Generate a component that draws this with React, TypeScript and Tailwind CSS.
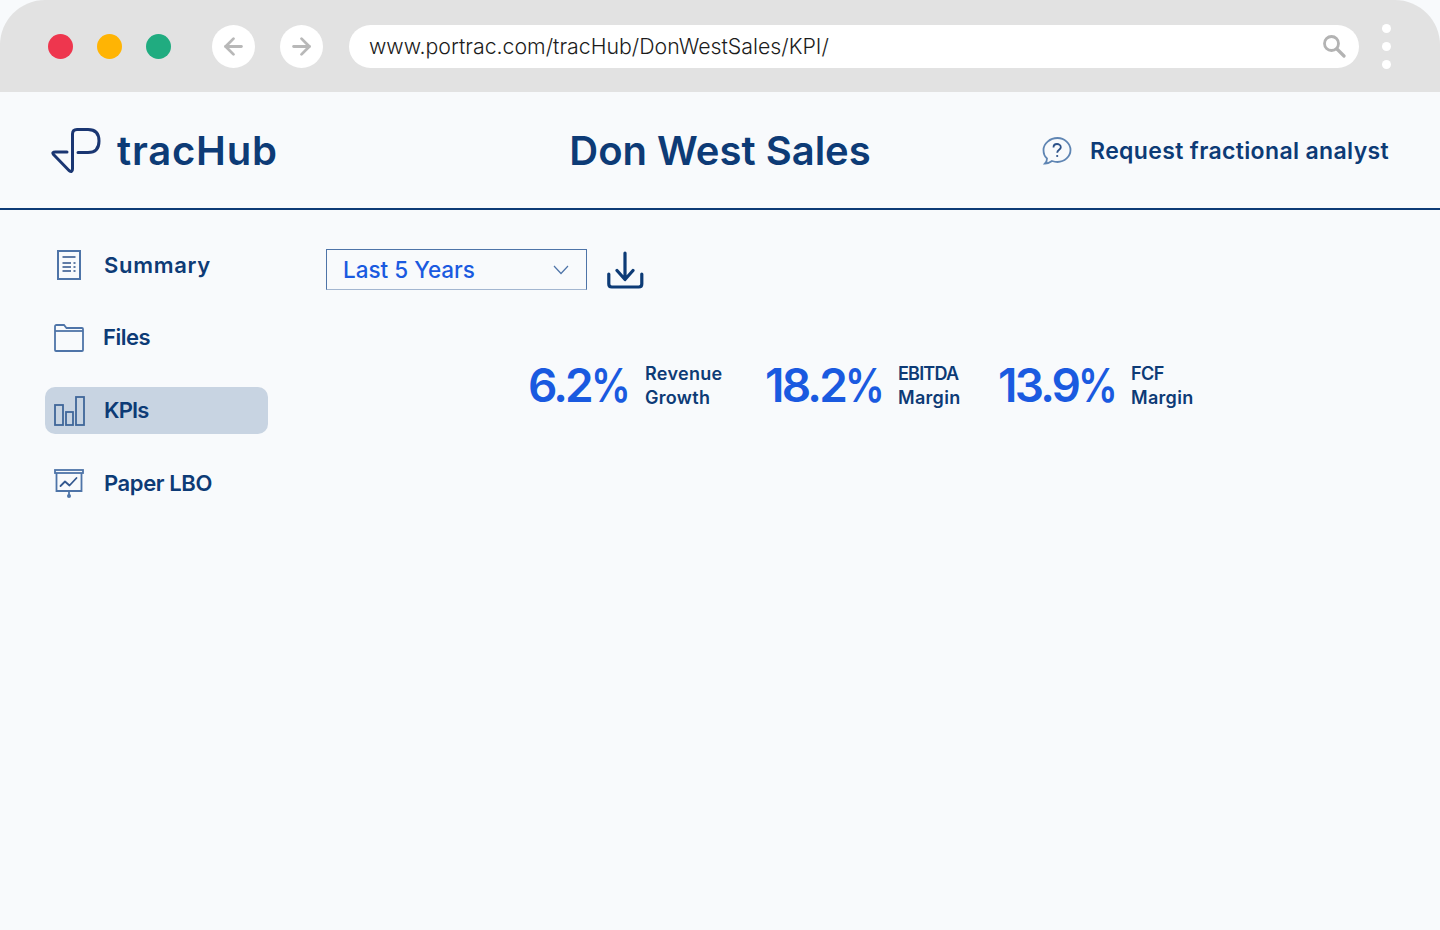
import { ArrowLeft, ArrowRight } from "lucide-react";
import type { ReactNode } from "react";

const LogoMark = () => (
  <svg width="50" height="46" viewBox="0 0 50 46" fill="none" stroke="#1a3672" strokeWidth="3" strokeLinejoin="round" strokeLinecap="round">
    <path d="M16 24H4.500Q0.500 24 2.500 26.500L18 42.500Q21.500 45 21.500 41V6Q21.500 1.500 26 1.500H37Q48 1.500 48 13Q48 24.500 37 24.500H27" />
  </svg>
);

const SearchIcon = () => (
  <svg width="24" height="24" viewBox="0 0 24 24" fill="none" stroke="#b3b3b3" strokeWidth="2.800" strokeLinecap="round">
    <circle cx="9.500" cy="9.500" r="7" />
    <path d="M15 15L22 22" strokeWidth="3.200" />
  </svg>
);

const SummaryIcon = () => (
  <svg width="24" height="30" viewBox="0 0 24 30" fill="none" stroke="#4e74a8" strokeWidth="2">
    <rect x="1" y="1" width="22" height="28" />
    <path d="M5.500 7H18.500M5.500 13H14M16.500 13H18.500M5.500 17H14M16.500 17H18.500M5.500 21H14M16.500 21H18.500" strokeWidth="1.300" stroke="#2d5289" />
  </svg>
);

const FilesIcon = () => (
  <svg width="30" height="28" viewBox="0 0 30 28" fill="none" stroke="#4e74a8" strokeWidth="1.800">
    <path d="M1 26V2.500Q1 1 2.500 1H10L12.500 4H28Q29 4 29 5V26Q29 27 28 27H2Q1 27 1 26Z" />
    <path d="M1 7H29" />
  </svg>
);

const KpiIcon = () => (
  <svg width="31" height="30" viewBox="0 0 31 30" fill="none" stroke="#3f6699" strokeWidth="1.800">
    <rect x="1" y="9" width="8" height="20" />
    <rect x="12" y="16" width="7" height="13" />
    <rect x="22" y="1" width="8" height="28" />
  </svg>
);

const LboIcon = () => (
  <svg width="30" height="30" viewBox="0 0 30 30" fill="none" stroke="#4e74a8" strokeWidth="1.800">
    <rect x="1" y="1" width="28" height="3" />
    <path d="M2.500 4V22H27.500V4" />
    <path d="M15 22V26" />
    <circle cx="15" cy="27" r="2" fill="#4e74a8" stroke="none" />
    <path d="M6.500 17L11 12.500L15.500 16.500L22.500 9" stroke="#33588f" strokeWidth="1.800" strokeLinecap="round" strokeLinejoin="round" />
  </svg>
);

const QuestionIcon = () => (
  <svg width="30" height="30" viewBox="0 0 30 30" fill="none" stroke="#5f85b3" strokeWidth="1.800">
    <path d="M15.500 2C22.500 2 28.500 7.500 28.500 14S22.500 26 15.500 26C13.500 26 11.500 25.500 10 25C8 26.500 5.500 27.500 3 27.500C4.500 26 5 24.500 5 22.500C2.500 20.500 1.500 17.500 1.500 14C1.500 7.500 8 2 15.500 2Z" />
    <path d="M11.500 11.500C11.500 9.300 13 8 15 8S18.800 9.300 18.800 11.200C18.800 13.800 15.200 13.800 15.200 16.800" stroke="#2d5289" strokeWidth="1.800" />
    <circle cx="15.200" cy="20" r="1.100" fill="#2d5289" stroke="none" />
  </svg>
);

const DownloadIcon = () => (
  <svg width="37" height="38" viewBox="0 0 37 38" fill="none" stroke="#0d3b76" strokeWidth="3.200" strokeLinecap="round" strokeLinejoin="round">
    <path d="M18 2V28M10 19.500L18 28.500L26 19.500" />
    <path d="M1.800 23V33Q1.800 36 4.800 36H31.800Q34.800 36 34.800 33V23" />
  </svg>
);

const NavItem = ({ icon, label, active, pad, track }: { icon: ReactNode; label: string; active?: boolean; pad: string; track: string }) => (
  <div className={`flex items-center h-[47px] w-[223px] rounded-[10px] ${active ? "bg-[#c8d4e2]" : ""}`}>
    <div className={`flex items-center justify-center w-[48px] ${pad}`}>{icon}</div>
    <span className={`text-[22px] font-semibold text-[#0d3b76] ${track}`}>{label}</span>
  </div>
);

type KpiProps = {
  value: string;
  top: string;
  bottom: string;
  topTrack: string;
  bottomTrack: string;
  width: string;
  labelWidth: string;
};

const Kpi = ({ value, top, bottom, topTrack, bottomTrack, width, labelWidth }: KpiProps) => (
  <div className="flex items-center">
    <div className={`text-[46px] font-semibold text-[#1a5ae0] leading-none tracking-[-2.800px] whitespace-nowrap ${width}`}>
      {value}
      <span className="inline-block origin-left scale-x-[0.86]">%</span>
    </div>
    <div className={`text-[18px] leading-[24px] font-semibold text-[#0d3b76] mt-[2px] ${labelWidth}`}>
      <div className={topTrack}>{top}</div>
      <div className={bottomTrack}>{bottom}</div>
    </div>
  </div>
);

export default function App() {
  return (
    <div className="min-h-[930px] bg-[#f8fafc] font-['Inter',sans-serif]">
      <div className="h-[92px] bg-[#e2e2e2] rounded-t-[45px] flex items-center pl-[48px] pr-[49px]">
        <div className="flex gap-[24px] mr-[41px]">
          <div className="w-[25px] h-[25px] rounded-full bg-[#ee364e]" />
          <div className="w-[25px] h-[25px] rounded-full bg-[#ffb404]" />
          <div className="w-[25px] h-[25px] rounded-full bg-[#20ac80]" />
        </div>
        <div className="flex gap-[25px] mr-[26px]">
          <div className="w-[43px] h-[43px] rounded-full bg-white flex items-center justify-center">
            <ArrowLeft size={27} color="#b8b8b8" strokeWidth={2.500} />
          </div>
          <div className="w-[43px] h-[43px] rounded-full bg-white flex items-center justify-center">
            <ArrowRight size={27} color="#b8b8b8" strokeWidth={2.500} />
          </div>
        </div>
        <div className="flex-1 h-[43px] rounded-full bg-white flex items-center pl-[20px] pr-[13px]">
          <span className="flex-1 text-[21.300px] text-[#1c1c1c] font-light mt-[2px]">www.portrac.com/tracHub/DonWestSales/KPI/</span>
          <SearchIcon />
        </div>
        <div className="flex flex-col gap-[9px] ml-[23px]">
          <div className="w-[9px] h-[9px] rounded-full bg-white" />
          <div className="w-[9px] h-[9px] rounded-full bg-white" />
          <div className="w-[9px] h-[9px] rounded-full bg-white" />
        </div>
      </div>

      <header className="h-[118px] pt-[2px] border-b-2 border-[#0d3b76] grid grid-cols-3 items-center pl-[51px] pr-[51px]">
        <div className="flex items-center gap-[16px]">
          <LogoMark />
          <span className="text-[40px] font-semibold text-[#0d3b76] tracking-[0.800px]">tracHub</span>
        </div>
        <div className="text-center text-[40px] font-semibold text-[#0d3b76]">Don West Sales</div>
        <div className="flex items-center justify-end gap-[18px]">
          <QuestionIcon />
          <span className="text-[23px] font-semibold text-[#0d3b76] whitespace-nowrap tracking-[0.360px]">Request fractional analyst</span>
        </div>
      </header>

      <div className="flex">
        <nav className="pt-[31px] pl-[45px] flex flex-col gap-[26px] w-[326px]">
          <NavItem icon={<SummaryIcon />} label="Summary" pad="mr-[11px]" track="tracking-[0.700px] mt-[2px]" />
          <NavItem icon={<FilesIcon />} label="Files" pad="mr-[10px]" track="tracking-[-0.500px]" />
          <NavItem icon={<KpiIcon />} label="KPIs" active pad="mr-[11px]" track="tracking-[-0.800px]" />
          <NavItem icon={<LboIcon />} label="Paper LBO" pad="mr-[11px]" track="tracking-[-0.400px]" />
        </nav>
        <main className="flex-1 pt-[39px]">
          <div className="flex items-center gap-[20px]">
            <div className="w-[261px] h-[41px] border border-[#4e74a8] border-b-[#a3b6d0] flex items-center justify-between pl-[16px] pr-[17px]">
              <span className="text-[22.500px] font-medium text-[#1a5ae0] mt-[1px]">Last 5 Years</span>
              <svg width="16" height="10" viewBox="0 0 16 10" fill="none" stroke="#4e74a8" strokeWidth="1.200">
                <path d="M1 1L8 8.500L15 1" />
              </svg>
            </div>
            <DownloadIcon />
          </div>
          <div className="flex mt-[65px] ml-[202px] h-[60px]">
            <Kpi value="6.2" top="Revenue" bottom="Growth" topTrack="tracking-[0.300px]" bottomTrack="tracking-[0.300px]" width="w-[117px]" labelWidth="w-[120px]" />
            <Kpi value="18.2" top="EBITDA" bottom="Margin" topTrack="tracking-[-0.800px]" bottomTrack="tracking-[0.300px]" width="w-[133px]" labelWidth="w-[100px]" />
            <Kpi value="13.9" top="FCF" bottom="Margin" topTrack="tracking-[-0.600px]" bottomTrack="tracking-[0.300px]" width="w-[133px]" labelWidth="w-[100px]" />
          </div>
        </main>
      </div>
    </div>
  );
}
